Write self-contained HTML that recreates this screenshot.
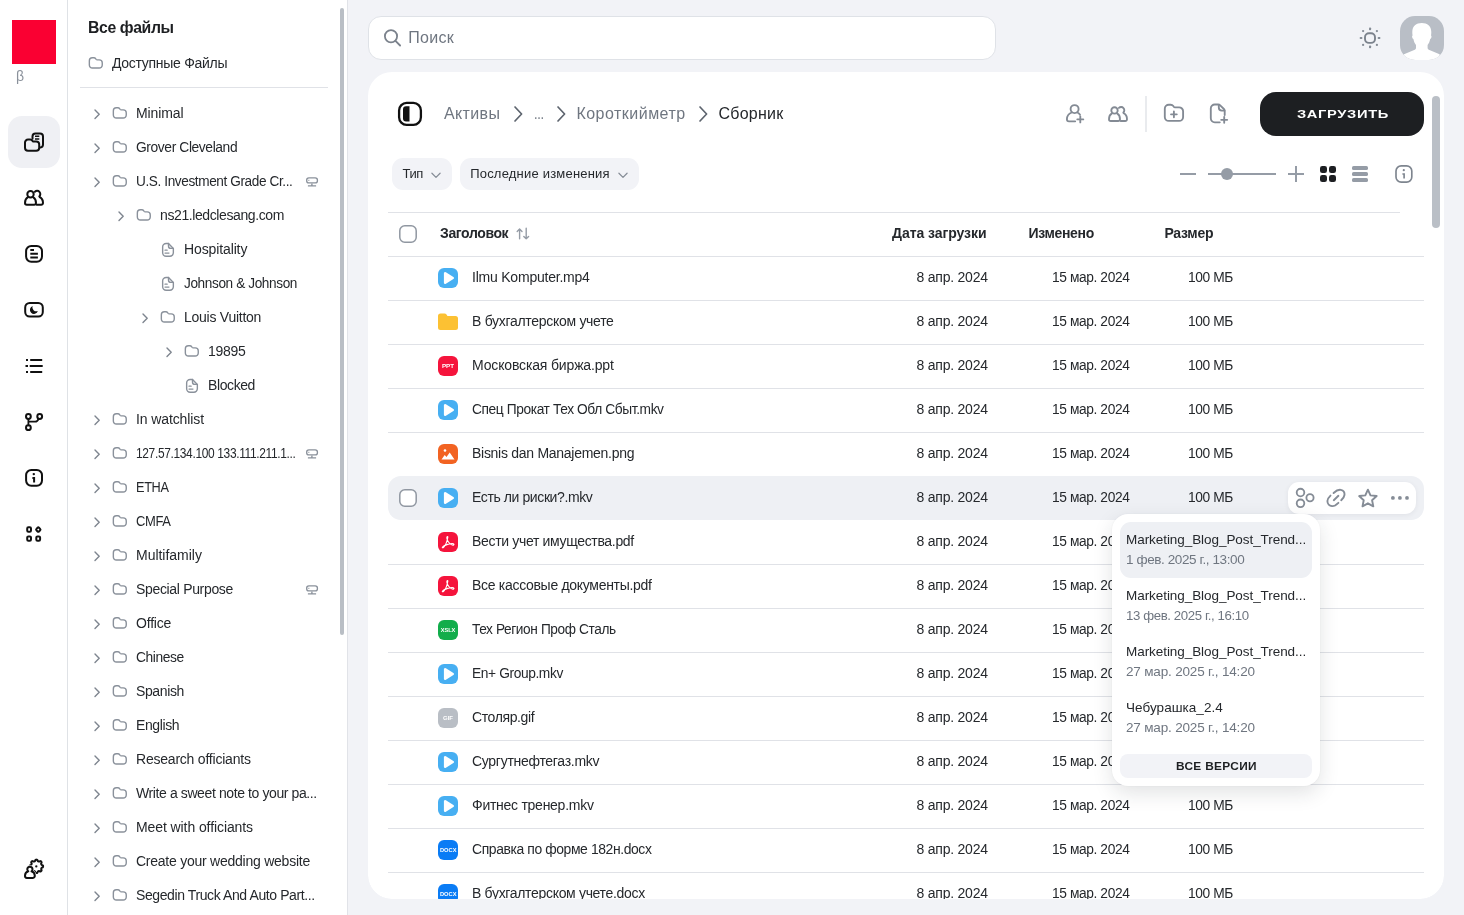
<!DOCTYPE html>
<html lang="ru"><head><meta charset="utf-8"><title>Файлы</title><style>
*{box-sizing:border-box;margin:0;padding:0}
html,body{width:1464px;height:915px;overflow:hidden}
body{background:#f2f3f7;font-family:"Liberation Sans",sans-serif;color:#1d1f22;position:relative;font-size:14px}
.abs{position:absolute}
.t{position:absolute;white-space:nowrap;line-height:20px}
svg{position:absolute;overflow:visible}
#app{position:absolute;left:0;top:0;width:1464px;height:915px;overflow:hidden;will-change:transform}
#rail{position:absolute;left:0;top:0;width:68px;height:915px;background:#fff;border-right:1px solid #dfe2e6}
#side{position:absolute;left:68px;top:0;width:280px;height:915px;background:#fff;border-right:1px solid #e1e3e8}
.tree{font-size:14.2px;letter-spacing:-0.1px;color:#25282c}
.row{position:absolute;left:388px;width:1036px;height:44px;border-top:1px solid #e0e2e7}
.cell{position:absolute;white-space:nowrap;line-height:20px;top:11px;font-size:14.2px;letter-spacing:-0.15px;color:#25282c}
.fi{position:absolute;left:50px;top:11px;width:20px;height:20px;border-radius:6px}
</style></head><body><div id="app">
<div id="rail"></div>
<div class="abs" style="left:12px;top:20px;width:44px;height:44px;background:#fa0032"></div>
<div class="t" style="left:16px;top:66px;font-size:14px;color:#8a919b">β</div>
<div class="abs" style="left:8px;top:116px;width:52px;height:52px;border-radius:14px;background:#eff0f4"></div>
<svg style="left:22px;top:130px" width="24" height="24" viewBox="0 0 24 24" fill="none" stroke="#111" stroke-width="2" stroke-linecap="round" stroke-linejoin="round" ><path d="M10.500 8.800V6.600a3 3 0 0 1 3-3h4.500a3 3 0 0 1 3 3v8a3 3 0 0 1-2.600 3"/><path d="M13 6.300h4.300M13 8.900h4.300" stroke-width="1.500" stroke-linecap="butt"/><path d="M3 12.600a3 3 0 0 1 3-3h2.200c.9 0 1.600.4 2.100 1.100l.6.800h3.300a3 3 0 0 1 3 3v3.200a3 3 0 0 1-3 3H6a3 3 0 0 1-3-3z"/></svg>
<svg style="left:22px;top:186px" width="24" height="24" viewBox="0 0 24 24" fill="none" stroke="#111" stroke-width="2" stroke-linecap="round" stroke-linejoin="round" ><circle cx="8.500" cy="8.200" r="3.200"/><path d="M5.900 11.200C4 12.300 3 14.500 3 17a1.800 1.800 0 0 0 1.800 1.800h7.400A1.800 1.800 0 0 0 14 17c0-2.500-1-4.700-2.900-5.800"/><path d="M12.900 5.700a3.200 3.200 0 1 1 4.400 4.700M17.600 11c2.200 1.100 3.400 3.400 3.400 6a1.800 1.800 0 0 1-1.800 1.800h-4.500"/></svg>
<svg style="left:22px;top:242px" width="24" height="24" viewBox="0 0 24 24" fill="none" stroke="#111" stroke-width="2" stroke-linecap="round" stroke-linejoin="round" ><rect x="4.100" y="3.900" width="15.900" height="15.800" rx="5.200"/><path d="M8.300 7.900h3.700M8.300 11.800h7.600M8.300 15.500h7.600" stroke-linecap="butt"/></svg>
<svg style="left:22px;top:298px" width="24" height="24" viewBox="0 0 24 24" fill="none" stroke="#111" stroke-width="2" stroke-linecap="round" stroke-linejoin="round" ><rect x="3.200" y="5" width="17.600" height="13.600" rx="4.500"/><path d="M15.900 13a4 4 0 0 1-5.300-5.100 4.100 4.100 0 1 0 5.300 5.100z" fill="#111" stroke="none"/></svg>
<svg style="left:22px;top:354px" width="24" height="24" viewBox="0 0 24 24" fill="none" stroke="#111" stroke-width="2" stroke-linecap="round" stroke-linejoin="round" ><path d="M8.200 6h12M7.700 12h13M8.200 18h12M4 6h2M3.500 12h2.500M4 18h2" stroke-linecap="butt"/></svg>
<svg style="left:22px;top:410px" width="24" height="24" viewBox="0 0 24 24" fill="none" stroke="#111" stroke-width="2" stroke-linecap="round" stroke-linejoin="round" ><circle cx="6.400" cy="6.500" r="2.400"/><circle cx="6.400" cy="17.700" r="2.400"/><circle cx="17.700" cy="6.500" r="2.400"/><path d="M6.400 9v6.300M6.400 11.700h6.800c1.500 0 2.600-1 3.400-2.800" stroke-width="1.800"/></svg>
<svg style="left:22px;top:466px" width="24" height="24" viewBox="0 0 24 24" fill="none" stroke="#111" stroke-width="2" stroke-linecap="round" stroke-linejoin="round" ><rect x="4.100" y="3.900" width="15.900" height="15.800" rx="5.200"/><path d="M10.400 12h1.700v4.400" stroke-linecap="butt" stroke-linejoin="miter"/><circle cx="11.800" cy="8.100" r="1.200" fill="#111" stroke="none"/></svg>
<svg style="left:22px;top:522px" width="24" height="24" viewBox="0 0 24 24" fill="none" stroke="#111" stroke-width="2" stroke-linecap="round" stroke-linejoin="round" ><rect x="5.200" y="5.300" width="3.800" height="4.400" rx="1.200"/><rect x="5.200" y="14.400" width="3.800" height="4.400" rx="1.200"/><rect x="14.300" y="14.400" width="3.800" height="4.400" rx="1.200"/><rect x="14.500" y="5.800" width="3.600" height="3.600" rx="1" transform="rotate(45 16.300 7.600)"/></svg>
<svg style="left:22px;top:857px" width="24" height="24" viewBox="0 0 24 24" fill="none" stroke="#111" stroke-width="2" stroke-linecap="round" stroke-linejoin="round" ><path d="M14.40 2.62 L14.73 2.63 L15.05 2.65 L15.35 2.91 L15.57 3.42 L15.75 3.92 L15.94 4.21 L16.19 4.29 L16.44 4.38 L16.67 4.49 L16.91 4.61 L17.25 4.54 L17.73 4.31 L18.25 4.11 L18.64 4.14 L18.89 4.35 L19.12 4.58 L19.35 4.81 L19.56 5.06 L19.59 5.45 L19.39 5.97 L19.16 6.45 L19.09 6.79 L19.21 7.03 L19.32 7.26 L19.41 7.51 L19.49 7.76 L19.78 7.95 L20.28 8.13 L20.79 8.35 L21.05 8.65 L21.07 8.97 L21.08 9.30 L21.07 9.63 L21.05 9.95 L20.79 10.25 L20.28 10.47 L19.78 10.65 L19.49 10.84 L19.41 11.09 L19.32 11.34 L19.21 11.57 L19.09 11.81 L19.16 12.15 L19.39 12.63 L19.59 13.15 L19.56 13.54 L19.35 13.79 L19.12 14.02 L18.89 14.25 L18.64 14.46 L18.25 14.49 L17.73 14.29 L17.25 14.06 L16.91 13.99 L16.67 14.11 L16.44 14.22 L16.19 14.31 L15.94 14.39 L15.75 14.68 L15.57 15.18 L15.35 15.69 L15.05 15.95 L14.73 15.97 L14.40 15.98 L14.07 15.97 L13.75 15.95 L13.45 15.69 L13.23 15.18 L13.05 14.68 L12.86 14.39 L12.61 14.31 L12.36 14.22 L12.13 14.11 L11.89 13.99 L11.55 14.06 L11.07 14.29 L10.55 14.49 L10.16 14.46 L9.91 14.25 L9.68 14.02 L9.45 13.79 L9.24 13.54 L9.21 13.15 L9.41 12.63 L9.64 12.15 L9.71 11.81 L9.59 11.57 L9.48 11.34 L9.39 11.09 L9.31 10.84 L9.02 10.65 L8.52 10.47 L8.01 10.25 L7.75 9.95 L7.73 9.63 L7.72 9.30 L7.73 8.97 L7.75 8.65 L8.01 8.35 L8.52 8.13 L9.02 7.95 L9.31 7.76 L9.39 7.51 L9.48 7.26 L9.59 7.03 L9.71 6.79 L9.64 6.45 L9.41 5.97 L9.21 5.45 L9.24 5.06 L9.45 4.81 L9.68 4.58 L9.91 4.35 L10.16 4.14 L10.55 4.11 L11.07 4.31 L11.55 4.54 L11.89 4.61 L12.13 4.49 L12.36 4.38 L12.61 4.29 L12.86 4.21 L13.05 3.92 L13.23 3.42 L13.45 2.91 L13.75 2.65 L14.07 2.63Z" stroke-width="2"/><circle cx="14.300" cy="9.400" r="1.150" fill="#111" stroke="none"/><path d="M6.300 14.300a2.600 2.600 0 1 1 3.200 0c1.900.6 3.300 2.400 3.300 4.500v.3a1.800 1.800 0 0 1-1.800 1.800H4.800A1.800 1.800 0 0 1 3 19.100v-.3c0-2.100 1.400-3.900 3.300-4.500z" fill="#fff" stroke="#fff" stroke-width="3"/><path d="M6.300 14.300a2.600 2.600 0 1 1 3.200 0c1.900.6 3.300 2.400 3.300 4.500v.3a1.800 1.800 0 0 1-1.800 1.800H4.800A1.800 1.800 0 0 1 3 19.100v-.3c0-2.100 1.400-3.900 3.300-4.500z" fill="#fff"/></svg>
<div id="side"></div>
<div class="t " style="left:88.3px;top:18px;font-size:16px;font-weight:700;color:#1d1f22;letter-spacing:-0.400px;transform:scaleX(0.9867);transform-origin:0 0;">Все файлы</div>
<svg style="left:88px;top:55px" width="16" height="16" viewBox="0 0 16 16" fill="none" stroke="#8a919b" stroke-width="1.4" stroke-linecap="round" stroke-linejoin="round" ><path d="M1.350 5.750a3 3 0 0 1 3-3h1.500c.8 0 1.400.3 1.800.9l.5.700c.3.400.6.500 1.100.500h2a3 3 0 0 1 3 3v2.200a3 3 0 0 1-3 3H4.350a3 3 0 0 1-3-3z"/></svg>
<div class="t " style="left:112px;top:53px;font-size:14px;color:#25282c;letter-spacing:-0.288px;">Доступные Файлы</div>
<div class="abs" style="left:80px;top:87px;width:248px;height:1px;background:#e0e2e7"></div>
<svg style="left:94.55px;top:109.65px" width="5" height="9" viewBox="0 0 5 9" fill="none" stroke="#7e858f" stroke-width="1.4" stroke-linecap="round" stroke-linejoin="round" ><path d="M0 0l4.200 4.200L0 8.400"/></svg>
<svg style="left:112px;top:105px" width="16" height="16" viewBox="0 0 16 16" fill="none" stroke="#8a919b" stroke-width="1.4" stroke-linecap="round" stroke-linejoin="round" ><path d="M1.350 5.750a3 3 0 0 1 3-3h1.500c.8 0 1.400.3 1.800.9l.5.700c.3.400.6.500 1.100.500h2a3 3 0 0 1 3 3v2.200a3 3 0 0 1-3 3H4.350a3 3 0 0 1-3-3z"/></svg>
<div class="t " style="left:136px;top:103.4px;font-size:14px;color:#25282c;letter-spacing:-0.122px;">Minimal</div>
<svg style="left:94.55px;top:143.65px" width="5" height="9" viewBox="0 0 5 9" fill="none" stroke="#7e858f" stroke-width="1.4" stroke-linecap="round" stroke-linejoin="round" ><path d="M0 0l4.200 4.200L0 8.400"/></svg>
<svg style="left:112px;top:139px" width="16" height="16" viewBox="0 0 16 16" fill="none" stroke="#8a919b" stroke-width="1.4" stroke-linecap="round" stroke-linejoin="round" ><path d="M1.350 5.750a3 3 0 0 1 3-3h1.500c.8 0 1.400.3 1.800.9l.5.700c.3.400.6.500 1.100.500h2a3 3 0 0 1 3 3v2.200a3 3 0 0 1-3 3H4.350a3 3 0 0 1-3-3z"/></svg>
<div class="t " style="left:136px;top:137.4px;font-size:14px;color:#25282c;letter-spacing:-0.400px;transform:scaleX(0.9870);transform-origin:0 0;">Grover Cleveland</div>
<svg style="left:94.55px;top:177.65px" width="5" height="9" viewBox="0 0 5 9" fill="none" stroke="#7e858f" stroke-width="1.4" stroke-linecap="round" stroke-linejoin="round" ><path d="M0 0l4.200 4.200L0 8.400"/></svg>
<svg style="left:112px;top:173px" width="16" height="16" viewBox="0 0 16 16" fill="none" stroke="#8a919b" stroke-width="1.4" stroke-linecap="round" stroke-linejoin="round" ><path d="M1.350 5.750a3 3 0 0 1 3-3h1.500c.8 0 1.400.3 1.800.9l.5.700c.3.400.6.500 1.100.500h2a3 3 0 0 1 3 3v2.200a3 3 0 0 1-3 3H4.350a3 3 0 0 1-3-3z"/></svg>
<div class="t " style="left:136px;top:171.4px;font-size:14px;color:#25282c;letter-spacing:-0.400px;transform:scaleX(0.9712);transform-origin:0 0;">U.S. Investment Grade Cr...</div>
<svg style="left:305px;top:174px" width="14" height="14" viewBox="0 0 14 14" fill="none" stroke="#8a919b" stroke-width="1.35" stroke-linecap="round" stroke-linejoin="round" ><rect x="1.700" y="3.800" width="10.700" height="5.100" rx="2.200"/><path d="M6.900 9.500v1.800M2.900 11.900h8.200M3.400 6.400h.9" stroke-linecap="butt"/></svg>
<svg style="left:118.55px;top:211.65px" width="5" height="9" viewBox="0 0 5 9" fill="none" stroke="#7e858f" stroke-width="1.4" stroke-linecap="round" stroke-linejoin="round" ><path d="M0 0l4.200 4.200L0 8.400"/></svg>
<svg style="left:136px;top:207px" width="16" height="16" viewBox="0 0 16 16" fill="none" stroke="#8a919b" stroke-width="1.4" stroke-linecap="round" stroke-linejoin="round" ><path d="M1.350 5.750a3 3 0 0 1 3-3h1.500c.8 0 1.400.3 1.800.9l.5.700c.3.400.6.500 1.100.500h2a3 3 0 0 1 3 3v2.200a3 3 0 0 1-3 3H4.350a3 3 0 0 1-3-3z"/></svg>
<div class="t " style="left:160px;top:205.4px;font-size:14px;color:#25282c;letter-spacing:-0.396px;">ns21.ledclesang.com</div>
<svg style="left:160px;top:241px" width="16" height="16" viewBox="0 0 16 16" fill="none" stroke="#8a919b" stroke-width="1.4" stroke-linecap="round" stroke-linejoin="round" ><path d="M8.500 2.550H6.150a3.500 3.500 0 0 0-3.500 3.500v5.700a3.500 3.500 0 0 0 3.500 3.500h3.700a3.500 3.500 0 0 0 3.500-3.500V7.400z"/><path d="M8.500 2.550v2.350a2.500 2.500 0 0 0 2.500 2.500h2.350"/><path d="M5 9.200h2.200M5 12.100h4" stroke-width="1.200"/></svg>
<div class="t " style="left:184px;top:239.4px;font-size:14px;color:#25282c;letter-spacing:-0.119px;">Hospitality</div>
<svg style="left:160px;top:275px" width="16" height="16" viewBox="0 0 16 16" fill="none" stroke="#8a919b" stroke-width="1.4" stroke-linecap="round" stroke-linejoin="round" ><path d="M8.500 2.550H6.150a3.500 3.500 0 0 0-3.500 3.500v5.700a3.500 3.500 0 0 0 3.500 3.500h3.700a3.500 3.500 0 0 0 3.500-3.500V7.400z"/><path d="M8.500 2.550v2.350a2.500 2.500 0 0 0 2.500 2.500h2.350"/><path d="M5 9.200h2.200M5 12.100h4" stroke-width="1.200"/></svg>
<div class="t " style="left:184px;top:273.4px;font-size:14px;color:#25282c;letter-spacing:-0.400px;transform:scaleX(0.9727);transform-origin:0 0;">Johnson &amp; Johnson</div>
<svg style="left:142.55px;top:313.65px" width="5" height="9" viewBox="0 0 5 9" fill="none" stroke="#7e858f" stroke-width="1.4" stroke-linecap="round" stroke-linejoin="round" ><path d="M0 0l4.200 4.200L0 8.400"/></svg>
<svg style="left:160px;top:309px" width="16" height="16" viewBox="0 0 16 16" fill="none" stroke="#8a919b" stroke-width="1.4" stroke-linecap="round" stroke-linejoin="round" ><path d="M1.350 5.750a3 3 0 0 1 3-3h1.500c.8 0 1.400.3 1.800.9l.5.700c.3.400.6.500 1.100.500h2a3 3 0 0 1 3 3v2.200a3 3 0 0 1-3 3H4.350a3 3 0 0 1-3-3z"/></svg>
<div class="t " style="left:184px;top:307.4px;font-size:14px;color:#25282c;letter-spacing:-0.253px;">Louis Vuitton</div>
<svg style="left:166.55px;top:347.65px" width="5" height="9" viewBox="0 0 5 9" fill="none" stroke="#7e858f" stroke-width="1.4" stroke-linecap="round" stroke-linejoin="round" ><path d="M0 0l4.200 4.200L0 8.400"/></svg>
<svg style="left:184px;top:343px" width="16" height="16" viewBox="0 0 16 16" fill="none" stroke="#8a919b" stroke-width="1.4" stroke-linecap="round" stroke-linejoin="round" ><path d="M1.350 5.750a3 3 0 0 1 3-3h1.500c.8 0 1.400.3 1.800.9l.5.700c.3.400.6.500 1.100.500h2a3 3 0 0 1 3 3v2.200a3 3 0 0 1-3 3H4.350a3 3 0 0 1-3-3z"/></svg>
<div class="t " style="left:208px;top:341.4px;font-size:14px;color:#25282c;letter-spacing:-0.284px;">19895</div>
<svg style="left:184px;top:377px" width="16" height="16" viewBox="0 0 16 16" fill="none" stroke="#8a919b" stroke-width="1.4" stroke-linecap="round" stroke-linejoin="round" ><path d="M8.500 2.550H6.150a3.500 3.500 0 0 0-3.500 3.500v5.700a3.500 3.500 0 0 0 3.500 3.500h3.700a3.500 3.500 0 0 0 3.500-3.500V7.400z"/><path d="M8.500 2.550v2.350a2.500 2.500 0 0 0 2.500 2.500h2.350"/><path d="M5 9.200h2.200M5 12.100h4" stroke-width="1.200"/></svg>
<div class="t " style="left:208px;top:375.4px;font-size:14px;color:#25282c;letter-spacing:-0.400px;">Blocked</div>
<svg style="left:94.55px;top:415.65px" width="5" height="9" viewBox="0 0 5 9" fill="none" stroke="#7e858f" stroke-width="1.4" stroke-linecap="round" stroke-linejoin="round" ><path d="M0 0l4.200 4.200L0 8.400"/></svg>
<svg style="left:112px;top:411px" width="16" height="16" viewBox="0 0 16 16" fill="none" stroke="#8a919b" stroke-width="1.4" stroke-linecap="round" stroke-linejoin="round" ><path d="M1.350 5.750a3 3 0 0 1 3-3h1.500c.8 0 1.400.3 1.800.9l.5.700c.3.400.6.500 1.100.500h2a3 3 0 0 1 3 3v2.200a3 3 0 0 1-3 3H4.350a3 3 0 0 1-3-3z"/></svg>
<div class="t " style="left:136px;top:409.4px;font-size:14px;color:#25282c;letter-spacing:-0.105px;">In watchlist</div>
<svg style="left:94.55px;top:449.65px" width="5" height="9" viewBox="0 0 5 9" fill="none" stroke="#7e858f" stroke-width="1.4" stroke-linecap="round" stroke-linejoin="round" ><path d="M0 0l4.200 4.200L0 8.400"/></svg>
<svg style="left:112px;top:445px" width="16" height="16" viewBox="0 0 16 16" fill="none" stroke="#8a919b" stroke-width="1.4" stroke-linecap="round" stroke-linejoin="round" ><path d="M1.350 5.750a3 3 0 0 1 3-3h1.500c.8 0 1.400.3 1.800.9l.5.700c.3.400.6.500 1.100.500h2a3 3 0 0 1 3 3v2.200a3 3 0 0 1-3 3H4.350a3 3 0 0 1-3-3z"/></svg>
<div class="t " style="left:136px;top:443.4px;font-size:14px;color:#25282c;letter-spacing:-0.400px;transform:scaleX(0.8537);transform-origin:0 0;">127.57.134.100 133.111.211.1...</div>
<svg style="left:305px;top:446px" width="14" height="14" viewBox="0 0 14 14" fill="none" stroke="#8a919b" stroke-width="1.35" stroke-linecap="round" stroke-linejoin="round" ><rect x="1.700" y="3.800" width="10.700" height="5.100" rx="2.200"/><path d="M6.900 9.500v1.800M2.900 11.900h8.200M3.400 6.400h.9" stroke-linecap="butt"/></svg>
<svg style="left:94.55px;top:483.65px" width="5" height="9" viewBox="0 0 5 9" fill="none" stroke="#7e858f" stroke-width="1.4" stroke-linecap="round" stroke-linejoin="round" ><path d="M0 0l4.200 4.200L0 8.400"/></svg>
<svg style="left:112px;top:479px" width="16" height="16" viewBox="0 0 16 16" fill="none" stroke="#8a919b" stroke-width="1.4" stroke-linecap="round" stroke-linejoin="round" ><path d="M1.350 5.750a3 3 0 0 1 3-3h1.500c.8 0 1.400.3 1.800.9l.5.700c.3.400.6.500 1.100.500h2a3 3 0 0 1 3 3v2.200a3 3 0 0 1-3 3H4.350a3 3 0 0 1-3-3z"/></svg>
<div class="t " style="left:136px;top:477.4px;font-size:14px;color:#25282c;letter-spacing:-0.400px;transform:scaleX(0.9103);transform-origin:0 0;">ETHA</div>
<svg style="left:94.55px;top:517.65px" width="5" height="9" viewBox="0 0 5 9" fill="none" stroke="#7e858f" stroke-width="1.4" stroke-linecap="round" stroke-linejoin="round" ><path d="M0 0l4.200 4.200L0 8.400"/></svg>
<svg style="left:112px;top:513px" width="16" height="16" viewBox="0 0 16 16" fill="none" stroke="#8a919b" stroke-width="1.4" stroke-linecap="round" stroke-linejoin="round" ><path d="M1.350 5.750a3 3 0 0 1 3-3h1.500c.8 0 1.400.3 1.800.9l.5.700c.3.400.6.500 1.100.500h2a3 3 0 0 1 3 3v2.200a3 3 0 0 1-3 3H4.350a3 3 0 0 1-3-3z"/></svg>
<div class="t " style="left:136px;top:511.4px;font-size:14px;color:#25282c;letter-spacing:-0.400px;transform:scaleX(0.9260);transform-origin:0 0;">CMFA</div>
<svg style="left:94.55px;top:551.65px" width="5" height="9" viewBox="0 0 5 9" fill="none" stroke="#7e858f" stroke-width="1.4" stroke-linecap="round" stroke-linejoin="round" ><path d="M0 0l4.200 4.200L0 8.400"/></svg>
<svg style="left:112px;top:547px" width="16" height="16" viewBox="0 0 16 16" fill="none" stroke="#8a919b" stroke-width="1.4" stroke-linecap="round" stroke-linejoin="round" ><path d="M1.350 5.750a3 3 0 0 1 3-3h1.500c.8 0 1.400.3 1.800.9l.5.700c.3.400.6.500 1.100.500h2a3 3 0 0 1 3 3v2.200a3 3 0 0 1-3 3H4.350a3 3 0 0 1-3-3z"/></svg>
<div class="t " style="left:136px;top:545.4px;font-size:14px;color:#25282c;letter-spacing:-0.022px;">Multifamily</div>
<svg style="left:94.55px;top:585.65px" width="5" height="9" viewBox="0 0 5 9" fill="none" stroke="#7e858f" stroke-width="1.4" stroke-linecap="round" stroke-linejoin="round" ><path d="M0 0l4.200 4.200L0 8.400"/></svg>
<svg style="left:112px;top:581px" width="16" height="16" viewBox="0 0 16 16" fill="none" stroke="#8a919b" stroke-width="1.4" stroke-linecap="round" stroke-linejoin="round" ><path d="M1.350 5.750a3 3 0 0 1 3-3h1.500c.8 0 1.400.3 1.800.9l.5.700c.3.400.6.500 1.100.500h2a3 3 0 0 1 3 3v2.200a3 3 0 0 1-3 3H4.350a3 3 0 0 1-3-3z"/></svg>
<div class="t " style="left:136px;top:579.4px;font-size:14px;color:#25282c;letter-spacing:-0.332px;">Special Purpose</div>
<svg style="left:305px;top:582px" width="14" height="14" viewBox="0 0 14 14" fill="none" stroke="#8a919b" stroke-width="1.35" stroke-linecap="round" stroke-linejoin="round" ><rect x="1.700" y="3.800" width="10.700" height="5.100" rx="2.200"/><path d="M6.900 9.500v1.800M2.900 11.900h8.200M3.400 6.400h.9" stroke-linecap="butt"/></svg>
<svg style="left:94.55px;top:619.65px" width="5" height="9" viewBox="0 0 5 9" fill="none" stroke="#7e858f" stroke-width="1.4" stroke-linecap="round" stroke-linejoin="round" ><path d="M0 0l4.200 4.200L0 8.400"/></svg>
<svg style="left:112px;top:615px" width="16" height="16" viewBox="0 0 16 16" fill="none" stroke="#8a919b" stroke-width="1.4" stroke-linecap="round" stroke-linejoin="round" ><path d="M1.350 5.750a3 3 0 0 1 3-3h1.500c.8 0 1.400.3 1.800.9l.5.700c.3.400.6.500 1.100.500h2a3 3 0 0 1 3 3v2.200a3 3 0 0 1-3 3H4.350a3 3 0 0 1-3-3z"/></svg>
<div class="t " style="left:136px;top:613.4px;font-size:14px;color:#25282c;letter-spacing:-0.183px;">Office</div>
<svg style="left:94.55px;top:653.65px" width="5" height="9" viewBox="0 0 5 9" fill="none" stroke="#7e858f" stroke-width="1.4" stroke-linecap="round" stroke-linejoin="round" ><path d="M0 0l4.200 4.200L0 8.400"/></svg>
<svg style="left:112px;top:649px" width="16" height="16" viewBox="0 0 16 16" fill="none" stroke="#8a919b" stroke-width="1.4" stroke-linecap="round" stroke-linejoin="round" ><path d="M1.350 5.750a3 3 0 0 1 3-3h1.500c.8 0 1.400.3 1.800.9l.5.700c.3.400.6.500 1.100.500h2a3 3 0 0 1 3 3v2.200a3 3 0 0 1-3 3H4.350a3 3 0 0 1-3-3z"/></svg>
<div class="t " style="left:136px;top:647.4px;font-size:14px;color:#25282c;letter-spacing:-0.400px;transform:scaleX(0.9862);transform-origin:0 0;">Chinese</div>
<svg style="left:94.55px;top:687.65px" width="5" height="9" viewBox="0 0 5 9" fill="none" stroke="#7e858f" stroke-width="1.4" stroke-linecap="round" stroke-linejoin="round" ><path d="M0 0l4.200 4.200L0 8.400"/></svg>
<svg style="left:112px;top:683px" width="16" height="16" viewBox="0 0 16 16" fill="none" stroke="#8a919b" stroke-width="1.4" stroke-linecap="round" stroke-linejoin="round" ><path d="M1.350 5.750a3 3 0 0 1 3-3h1.500c.8 0 1.400.3 1.800.9l.5.700c.3.400.6.500 1.100.500h2a3 3 0 0 1 3 3v2.200a3 3 0 0 1-3 3H4.350a3 3 0 0 1-3-3z"/></svg>
<div class="t " style="left:136px;top:681.4px;font-size:14px;color:#25282c;letter-spacing:-0.382px;">Spanish</div>
<svg style="left:94.55px;top:721.65px" width="5" height="9" viewBox="0 0 5 9" fill="none" stroke="#7e858f" stroke-width="1.4" stroke-linecap="round" stroke-linejoin="round" ><path d="M0 0l4.200 4.200L0 8.400"/></svg>
<svg style="left:112px;top:717px" width="16" height="16" viewBox="0 0 16 16" fill="none" stroke="#8a919b" stroke-width="1.4" stroke-linecap="round" stroke-linejoin="round" ><path d="M1.350 5.750a3 3 0 0 1 3-3h1.500c.8 0 1.400.3 1.800.9l.5.700c.3.400.6.500 1.100.500h2a3 3 0 0 1 3 3v2.200a3 3 0 0 1-3 3H4.350a3 3 0 0 1-3-3z"/></svg>
<div class="t " style="left:136px;top:715.4px;font-size:14px;color:#25282c;letter-spacing:-0.400px;">English</div>
<svg style="left:94.55px;top:755.65px" width="5" height="9" viewBox="0 0 5 9" fill="none" stroke="#7e858f" stroke-width="1.4" stroke-linecap="round" stroke-linejoin="round" ><path d="M0 0l4.200 4.200L0 8.400"/></svg>
<svg style="left:112px;top:751px" width="16" height="16" viewBox="0 0 16 16" fill="none" stroke="#8a919b" stroke-width="1.4" stroke-linecap="round" stroke-linejoin="round" ><path d="M1.350 5.750a3 3 0 0 1 3-3h1.500c.8 0 1.400.3 1.800.9l.5.700c.3.400.6.500 1.100.500h2a3 3 0 0 1 3 3v2.200a3 3 0 0 1-3 3H4.350a3 3 0 0 1-3-3z"/></svg>
<div class="t " style="left:136px;top:749.4px;font-size:14px;color:#25282c;letter-spacing:-0.217px;">Research officiants</div>
<svg style="left:94.55px;top:789.65px" width="5" height="9" viewBox="0 0 5 9" fill="none" stroke="#7e858f" stroke-width="1.4" stroke-linecap="round" stroke-linejoin="round" ><path d="M0 0l4.200 4.200L0 8.400"/></svg>
<svg style="left:112px;top:785px" width="16" height="16" viewBox="0 0 16 16" fill="none" stroke="#8a919b" stroke-width="1.4" stroke-linecap="round" stroke-linejoin="round" ><path d="M1.350 5.750a3 3 0 0 1 3-3h1.500c.8 0 1.400.3 1.800.9l.5.700c.3.400.6.500 1.100.500h2a3 3 0 0 1 3 3v2.200a3 3 0 0 1-3 3H4.350a3 3 0 0 1-3-3z"/></svg>
<div class="t " style="left:136px;top:783.4px;font-size:14px;color:#25282c;letter-spacing:-0.397px;">Write a sweet note to your pa...</div>
<svg style="left:94.55px;top:823.65px" width="5" height="9" viewBox="0 0 5 9" fill="none" stroke="#7e858f" stroke-width="1.4" stroke-linecap="round" stroke-linejoin="round" ><path d="M0 0l4.200 4.200L0 8.400"/></svg>
<svg style="left:112px;top:819px" width="16" height="16" viewBox="0 0 16 16" fill="none" stroke="#8a919b" stroke-width="1.4" stroke-linecap="round" stroke-linejoin="round" ><path d="M1.350 5.750a3 3 0 0 1 3-3h1.500c.8 0 1.400.3 1.800.9l.5.700c.3.400.6.500 1.100.500h2a3 3 0 0 1 3 3v2.200a3 3 0 0 1-3 3H4.350a3 3 0 0 1-3-3z"/></svg>
<div class="t " style="left:136px;top:817.4px;font-size:14px;color:#25282c;letter-spacing:-0.089px;">Meet with officiants</div>
<svg style="left:94.55px;top:857.65px" width="5" height="9" viewBox="0 0 5 9" fill="none" stroke="#7e858f" stroke-width="1.4" stroke-linecap="round" stroke-linejoin="round" ><path d="M0 0l4.200 4.200L0 8.400"/></svg>
<svg style="left:112px;top:853px" width="16" height="16" viewBox="0 0 16 16" fill="none" stroke="#8a919b" stroke-width="1.4" stroke-linecap="round" stroke-linejoin="round" ><path d="M1.350 5.750a3 3 0 0 1 3-3h1.500c.8 0 1.400.3 1.800.9l.5.700c.3.400.6.500 1.100.500h2a3 3 0 0 1 3 3v2.200a3 3 0 0 1-3 3H4.350a3 3 0 0 1-3-3z"/></svg>
<div class="t " style="left:136px;top:851.4px;font-size:14px;color:#25282c;letter-spacing:-0.244px;">Create your wedding website</div>
<svg style="left:94.55px;top:891.65px" width="5" height="9" viewBox="0 0 5 9" fill="none" stroke="#7e858f" stroke-width="1.4" stroke-linecap="round" stroke-linejoin="round" ><path d="M0 0l4.200 4.200L0 8.400"/></svg>
<svg style="left:112px;top:887px" width="16" height="16" viewBox="0 0 16 16" fill="none" stroke="#8a919b" stroke-width="1.4" stroke-linecap="round" stroke-linejoin="round" ><path d="M1.350 5.750a3 3 0 0 1 3-3h1.500c.8 0 1.400.3 1.800.9l.5.700c.3.400.6.500 1.100.500h2a3 3 0 0 1 3 3v2.200a3 3 0 0 1-3 3H4.350a3 3 0 0 1-3-3z"/></svg>
<div class="t " style="left:136px;top:885.4px;font-size:14px;color:#25282c;letter-spacing:-0.400px;">Segedin Truck And Auto Part...</div>
<div class="abs" style="left:340px;top:8px;width:4px;height:627px;border-radius:2px;background:#b9bec5"></div>
<div class="abs" style="left:368px;top:16px;width:628px;height:44px;border-radius:13px;background:#fff;border:1px solid #dfe2e7"></div>
<svg style="left:383px;top:28px" width="20" height="20" viewBox="0 0 20 20" fill="none" stroke="#7b828c" stroke-width="1.8" stroke-linecap="round" stroke-linejoin="round" ><circle cx="8" cy="8.200" r="6.100"/><path d="M12.500 12.800l4.600 4.700"/></svg>
<div class="t " style="left:408.3px;top:27.5px;font-size:16px;color:#6f7680;letter-spacing:0.289px;">Поиск</div>
<svg style="left:1358px;top:26px" width="24" height="24" viewBox="0 0 24 24" fill="none" stroke="#7b828c" stroke-width="1.9" stroke-linecap="round" stroke-linejoin="round" ><rect x="7" y="7.200" width="10" height="9.700" rx="4" stroke-width="1.900"/><g stroke="none" fill="#858c96"><rect x="11" y="1.500" width="2.100" height="2.700" rx=".8"/><rect x="11" y="19.500" width="2.100" height="2.700" rx=".8"/><rect x="1.700" y="10.950" width="2.700" height="2.100" rx=".8"/><rect x="19.700" y="10.950" width="2.700" height="2.100" rx=".8"/><circle cx="5.100" cy="5.100" r="1.150"/><circle cx="18.900" cy="5.100" r="1.150"/><circle cx="5.100" cy="18.900" r="1.150"/><circle cx="18.900" cy="18.900" r="1.150"/></g></svg>
<div class="abs" style="left:1400px;top:16px;width:44px;height:44px;border-radius:15px;background:#b9bec6;overflow:hidden"><svg style="left:0;top:0" width="44" height="44" viewBox="0 0 44 44" fill="#fff" stroke="none"><path d="M21.800 6.900c-5.500 0-9.500 3-9.500 9 0 1.500.1 2.600.3 3.600-.5.200-.6.900-.4 1.800.2 1 .7 1.700 1.200 1.800.5 2.500 1.400 4.500 2.600 6v3c0 .8-.4 1.300-1.200 1.600L4 38.300V44h35.600v-5.700l-10.800-4.600c-.8-.3-1.200-.8-1.200-1.600v-3c1.200-1.500 2.100-3.500 2.600-6 .5-.1 1-.8 1.200-1.800.2-.9.100-1.600-.4-1.800.2-1 .3-2.100.3-3.600 0-6-4-9-9.500-9z"/></svg></div>
<div class="abs" style="left:368px;top:72px;width:1076px;height:827px;border-radius:24px;background:#fff"></div>
<svg style="left:397px;top:101px" width="26" height="26" viewBox="0 0 26 26" fill="none" stroke="#111" stroke-width="2" stroke-linecap="round" stroke-linejoin="round" ><rect x="2.100" y="1.900" width="21.800" height="21.900" rx="7.500" stroke-width="2.300"/><path d="M6 8.300a3 3 0 0 1 3-3h3.500v15.100H9a3 3 0 0 1-3-3z" fill="#111" stroke="none"/></svg>
<div class="t " style="left:444px;top:103.8px;font-size:16px;color:#6f7680;letter-spacing:0.375px;">Активы</div>
<div class="t " style="left:533.5px;top:103.8px;font-size:16px;color:#6f7680;letter-spacing:-0.400px;transform:scaleX(0.7972);transform-origin:0 0;">...</div>
<div class="t " style="left:576.4px;top:103.8px;font-size:16px;color:#6f7680;letter-spacing:0.485px;">Короткийметр</div>
<div class="t " style="left:718.5px;top:103.8px;font-size:16px;color:#25282c;letter-spacing:0.234px;">Сборник</div>
<svg style="left:514.8px;top:106.5px" width="7" height="14" viewBox="0 0 7 14" fill="none" stroke="#5d646e" stroke-width="1.7" stroke-linecap="round" stroke-linejoin="round" ><path d="M0 0l6.600 7L0 14"/></svg>
<svg style="left:557.8px;top:106.5px" width="7" height="14" viewBox="0 0 7 14" fill="none" stroke="#5d646e" stroke-width="1.7" stroke-linecap="round" stroke-linejoin="round" ><path d="M0 0l6.600 7L0 14"/></svg>
<svg style="left:699.6px;top:106.5px" width="7" height="14" viewBox="0 0 7 14" fill="none" stroke="#5d646e" stroke-width="1.7" stroke-linecap="round" stroke-linejoin="round" ><path d="M0 0l6.600 7L0 14"/></svg>
<svg style="left:1062px;top:101px" width="24" height="24" viewBox="0 0 24 24" fill="none" stroke="#838a94" stroke-width="1.85" stroke-linecap="round" stroke-linejoin="round" ><circle cx="12.600" cy="8.100" r="4"/><path d="M9.700 11.500C6.600 12.800 4.900 15.600 4.900 18.200a2.100 2.100 0 0 0 2.100 2.100h6.200M15.300 11.500c1.200.5 2.100 1.300 2.700 2.300M18.300 15.400v6M15.300 18.400h6"/></svg>
<svg style="left:1106px;top:101px" width="24" height="24" viewBox="0 0 24 24" fill="none" stroke="#838a94" stroke-width="1.85" stroke-linecap="round" stroke-linejoin="round" ><g transform="translate(0 1.200)"><circle cx="8.500" cy="8.200" r="3.200"/><path d="M5.900 11.200C4 12.300 3 14.500 3 17a1.800 1.800 0 0 0 1.800 1.800h7.400A1.800 1.800 0 0 0 14 17c0-2.500-1-4.700-2.900-5.800"/><path d="M12.900 5.700a3.200 3.200 0 1 1 4.400 4.700M17.600 11c2.200 1.100 3.400 3.400 3.400 6a1.800 1.800 0 0 1-1.800 1.800h-4.500"/></g></svg>
<svg style="left:1162px;top:101px" width="24" height="24" viewBox="0 0 24 24" fill="none" stroke="#838a94" stroke-width="1.85" stroke-linecap="round" stroke-linejoin="round" ><path d="M2.800 7.700a4 4 0 0 1 4-4h1.900c1.200 0 2 .5 2.600 1.300l.5.700c.3.400.7.600 1.200.600h4.100a4 4 0 0 1 4 4v5.600a4 4 0 0 1-4 4H6.800a4 4 0 0 1-4-4z"/><path d="M11.900 10.400v5.800M9 13.300h5.800"/></svg>
<svg style="left:1206px;top:101px" width="24" height="24" viewBox="0 0 24 24" fill="none" stroke="#838a94" stroke-width="1.85" stroke-linecap="round" stroke-linejoin="round" ><path d="M13.800 21.300H8.800a4 4 0 0 1-4-4V7.500a4 4 0 0 1 4-4h3.400c.8 0 1.500.3 2 .8l3.700 3.700c.5.500.8 1.200.8 2v4"/><path d="M12.800 3.800v2.800a3 3 0 0 0 3 3h2.700M18.200 15.800v6M15.200 18.800h6"/></svg>
<div class="abs" style="left:1145.300px;top:96px;width:1.400px;height:36px;background:#e9ebee"></div>
<div class="abs" style="left:1260px;top:92px;width:164px;height:44px;border-radius:16px;background:#1d1f22"></div>
<div class="t " style="left:1296.6px;top:103.8px;font-size:11.2px;font-weight:700;color:#fff;letter-spacing:0.500px;transform:scaleX(1.3110);transform-origin:0 0;">ЗАГРУЗИТЬ</div>
<div class="abs" style="left:392px;top:158px;width:60px;height:32px;border-radius:11px;background:#f2f3f7"></div>
<div class="abs" style="left:460px;top:158px;width:179px;height:32px;border-radius:11px;background:#f2f3f7"></div>
<div class="t " style="left:402.4px;top:164px;font-size:13px;color:#25282c;letter-spacing:-0.336px;">Тип</div>
<div class="t " style="left:470.2px;top:164px;font-size:13px;color:#25282c;letter-spacing:0.202px;">Последние изменения</div>
<svg style="left:428.5px;top:167.5px" width="14" height="14" viewBox="0 0 24 24" fill="none" stroke="#858c96" stroke-width="2.1" stroke-linecap="round" stroke-linejoin="round" ><path d="M5 9l7 7 7-7"/></svg>
<svg style="left:615.5px;top:167.5px" width="14" height="14" viewBox="0 0 24 24" fill="none" stroke="#858c96" stroke-width="2.1" stroke-linecap="round" stroke-linejoin="round" ><path d="M5 9l7 7 7-7"/></svg>
<div class="abs" style="left:1180px;top:173px;width:16px;height:1.600px;background:#959ca6"></div>
<div class="abs" style="left:1208px;top:173px;width:68px;height:1.600px;background:#959ca6"></div>
<div class="abs" style="left:1220.600px;top:167.600px;width:12.400px;height:12.400px;border-radius:50%;background:#959ca6"></div>
<div class="abs" style="left:1288px;top:173px;width:16px;height:1.600px;background:#959ca6"></div>
<div class="abs" style="left:1295.200px;top:166px;width:1.600px;height:16px;background:#959ca6"></div>
<div class="abs" style="left:1320.1px;top:166.0px;width:7.100px;height:7.100px;border-radius:2.300px;background:#1d1f22"></div>
<div class="abs" style="left:1320.1px;top:174.9px;width:7.100px;height:7.100px;border-radius:2.300px;background:#1d1f22"></div>
<div class="abs" style="left:1329.0px;top:166.0px;width:7.100px;height:7.100px;border-radius:2.300px;background:#1d1f22"></div>
<div class="abs" style="left:1329.0px;top:174.9px;width:7.100px;height:7.100px;border-radius:2.300px;background:#1d1f22"></div>
<div class="abs" style="left:1352px;top:166px;width:16px;height:4px;border-radius:1.600px;background:#959ca6"></div>
<div class="abs" style="left:1352px;top:172px;width:16px;height:4px;border-radius:1.600px;background:#959ca6"></div>
<div class="abs" style="left:1352px;top:178px;width:16px;height:4px;border-radius:1.600px;background:#959ca6"></div>
<svg style="left:1392px;top:162px" width="24" height="24" viewBox="0 0 24 24" fill="none" stroke="#7e858f" stroke-width="1.65" stroke-linecap="round" stroke-linejoin="round" ><rect x="4" y="3.900" width="15.800" height="16.200" rx="5.200"/><path d="M10.400 12h1.700v4.400" stroke-linecap="butt" stroke-linejoin="miter"/><circle cx="11.800" cy="8.200" r="1.100" fill="#7e858f" stroke="none"/></svg>
<div class="abs" style="left:1432px;top:96px;width:8px;height:132px;border-radius:4px;background:#babfc6"></div>
<div class="abs" style="left:388px;top:212px;width:1012px;height:1px;background:#e0e2e7"></div>
<svg style="left:399px;top:225px" width="18" height="18" viewBox="0 0 18 18"><rect x=".8" y=".8" width="16.400" height="16.400" rx="5" fill="#fff" stroke="#9097a1" stroke-width="1.500"/></svg>
<div class="t " style="left:440px;top:223px;font-size:14px;font-weight:700;color:#25282c;letter-spacing:-0.382px;">Заголовок</div>
<div class="t " style="left:892px;top:223px;font-size:14px;font-weight:700;color:#25282c;letter-spacing:-0.061px;">Дата загрузки</div>
<div class="t " style="left:1028.4px;top:223px;font-size:14px;font-weight:700;color:#25282c;letter-spacing:-0.325px;">Изменено</div>
<div class="t " style="left:1164.4px;top:223px;font-size:14px;font-weight:700;color:#25282c;letter-spacing:-0.264px;">Размер</div>
<svg style="left:515px;top:226px" width="16" height="16" viewBox="0 0 16 16" fill="none" stroke="#959ca6" stroke-width="1.4" stroke-linecap="round" stroke-linejoin="round" ><path d="M4.600 12.700V3M2.200 5.400L4.600 3 7 5.400M11.200 2.300v10.500M8.800 10.400l2.400 2.400 2.400-2.400"/></svg>
<div class="row" style="top:256px;"><div class="fi" style="background:#47aff2"><svg style="left:0;top:0" width="20" height="20" viewBox="0 0 20 20" fill="#fff" stroke="#fff" stroke-width="2.600" stroke-linejoin="round"><path d="M7.200 5.300v9.400l7.500-4.700z"/></svg></div></div>
<div class="t " style="left:472px;top:267px;font-size:14px;color:#25282c;letter-spacing:-0.218px;">Ilmu Komputer.mp4</div>
<div class="t " style="left:916.5px;top:267px;font-size:14px;color:#25282c;letter-spacing:-0.227px;">8 апр. 2024</div>
<div class="t " style="left:1052.3px;top:267px;font-size:14px;color:#25282c;letter-spacing:-0.400px;transform:scaleX(0.9824);transform-origin:0 0;">15 мар. 2024</div>
<div class="t " style="left:1188px;top:267px;font-size:14px;color:#25282c;letter-spacing:-0.400px;transform:scaleX(0.9846);transform-origin:0 0;">100 МБ</div>
<div class="row" style="top:300px;"><svg style="left:49px;top:10px" width="22" height="22" viewBox="0 0 22 22" stroke="none" fill="#fcc133"><path d="M1 5a2.500 2.500 0 0 1 2.500-2.500h4c.9 0 1.500.4 2 1l1 1.500h8a2.500 2.500 0 0 1 2.500 2.500v9a2.500 2.500 0 0 1-2.500 2.500h-15a2.500 2.500 0 0 1-2.500-2.500z"/></svg></div>
<div class="t " style="left:472px;top:311px;font-size:14px;color:#25282c;letter-spacing:-0.293px;">В бухгалтерском учете</div>
<div class="t " style="left:916.5px;top:311px;font-size:14px;color:#25282c;letter-spacing:-0.227px;">8 апр. 2024</div>
<div class="t " style="left:1052.3px;top:311px;font-size:14px;color:#25282c;letter-spacing:-0.400px;transform:scaleX(0.9824);transform-origin:0 0;">15 мар. 2024</div>
<div class="t " style="left:1188px;top:311px;font-size:14px;color:#25282c;letter-spacing:-0.400px;transform:scaleX(0.9846);transform-origin:0 0;">100 МБ</div>
<div class="row" style="top:344px;"><div class="fi" style="background:#f5143c;color:#fff;font-size:6.2px;font-weight:700;text-align:center;line-height:20px;letter-spacing:0">PPT</div></div>
<div class="t " style="left:472px;top:355px;font-size:14px;color:#25282c;letter-spacing:-0.152px;">Московская биржа.ppt</div>
<div class="t " style="left:916.5px;top:355px;font-size:14px;color:#25282c;letter-spacing:-0.227px;">8 апр. 2024</div>
<div class="t " style="left:1052.3px;top:355px;font-size:14px;color:#25282c;letter-spacing:-0.400px;transform:scaleX(0.9824);transform-origin:0 0;">15 мар. 2024</div>
<div class="t " style="left:1188px;top:355px;font-size:14px;color:#25282c;letter-spacing:-0.400px;transform:scaleX(0.9846);transform-origin:0 0;">100 МБ</div>
<div class="row" style="top:388px;"><div class="fi" style="background:#47aff2"><svg style="left:0;top:0" width="20" height="20" viewBox="0 0 20 20" fill="#fff" stroke="#fff" stroke-width="2.600" stroke-linejoin="round"><path d="M7.200 5.300v9.400l7.500-4.700z"/></svg></div></div>
<div class="t " style="left:472px;top:399px;font-size:14px;color:#25282c;letter-spacing:-0.400px;transform:scaleX(0.9820);transform-origin:0 0;">Спец Прокат Тех Обл Сбыт.mkv</div>
<div class="t " style="left:916.5px;top:399px;font-size:14px;color:#25282c;letter-spacing:-0.227px;">8 апр. 2024</div>
<div class="t " style="left:1052.3px;top:399px;font-size:14px;color:#25282c;letter-spacing:-0.400px;transform:scaleX(0.9824);transform-origin:0 0;">15 мар. 2024</div>
<div class="t " style="left:1188px;top:399px;font-size:14px;color:#25282c;letter-spacing:-0.400px;transform:scaleX(0.9846);transform-origin:0 0;">100 МБ</div>
<div class="row" style="top:432px;"><div class="fi" style="background:#f26322"><svg style="left:0;top:0" width="20" height="20" viewBox="0 0 20 20" fill="#fff" stroke="none"><circle cx="7" cy="6.500" r="1.300"/><path d="M3.500 15.500l3.200-4.500 1.800 2 3.200-4.500 4.800 7z"/></svg></div></div>
<div class="t " style="left:472px;top:443px;font-size:14px;color:#25282c;letter-spacing:-0.278px;">Bisnis dan Manajemen.png</div>
<div class="t " style="left:916.5px;top:443px;font-size:14px;color:#25282c;letter-spacing:-0.227px;">8 апр. 2024</div>
<div class="t " style="left:1052.3px;top:443px;font-size:14px;color:#25282c;letter-spacing:-0.400px;transform:scaleX(0.9824);transform-origin:0 0;">15 мар. 2024</div>
<div class="t " style="left:1188px;top:443px;font-size:14px;color:#25282c;letter-spacing:-0.400px;transform:scaleX(0.9846);transform-origin:0 0;">100 МБ</div>
<div class="row" style="top:476px;background:#eef0f4;border-radius:13px;border-top-color:transparent;"><div class="fi" style="background:#47aff2"><svg style="left:0;top:0" width="20" height="20" viewBox="0 0 20 20" fill="#fff" stroke="#fff" stroke-width="2.600" stroke-linejoin="round"><path d="M7.200 5.300v9.400l7.500-4.700z"/></svg></div></div>
<div class="t " style="left:472px;top:487px;font-size:14px;color:#25282c;letter-spacing:-0.397px;">Есть ли риски?.mkv</div>
<div class="t " style="left:916.5px;top:487px;font-size:14px;color:#25282c;letter-spacing:-0.227px;">8 апр. 2024</div>
<div class="t " style="left:1052.3px;top:487px;font-size:14px;color:#25282c;letter-spacing:-0.400px;transform:scaleX(0.9824);transform-origin:0 0;">15 мар. 2024</div>
<div class="t " style="left:1188px;top:487px;font-size:14px;color:#25282c;letter-spacing:-0.400px;transform:scaleX(0.9846);transform-origin:0 0;">100 МБ</div>
<div class="row" style="top:520px;border-top-color:transparent;"><div class="fi" style="background:#f5143c"><svg style="left:0;top:0" width="20" height="20" viewBox="0 0 20 20" fill="none" stroke="#fff" stroke-width="1.100" stroke-linejoin="round"><path d="M9.600 4.500c-.7 0-.9 1-.6 2.300.5 2.200 2.700 5.700 5.200 6.200 1.300.3 2-.2 1.700-.8-.4-.8-3.500-.6-6.300.2-2.400.7-4.500 1.900-5.100 2.600-.5.600.2 1 .9.500 1.300-.9 3-4.500 3.800-7.300.4-1.500.9-3.700.4-3.700z"/></svg></div></div>
<div class="t " style="left:472px;top:531px;font-size:14px;color:#25282c;letter-spacing:-0.328px;">Вести учет имущества.pdf</div>
<div class="t " style="left:916.5px;top:531px;font-size:14px;color:#25282c;letter-spacing:-0.227px;">8 апр. 2024</div>
<div class="t " style="left:1052.3px;top:531px;font-size:14px;color:#25282c;letter-spacing:-0.400px;transform:scaleX(0.9824);transform-origin:0 0;">15 мар. 2024</div>
<div class="t " style="left:1188px;top:531px;font-size:14px;color:#25282c;letter-spacing:-0.400px;transform:scaleX(0.9846);transform-origin:0 0;">100 МБ</div>
<div class="row" style="top:564px;"><div class="fi" style="background:#f5143c"><svg style="left:0;top:0" width="20" height="20" viewBox="0 0 20 20" fill="none" stroke="#fff" stroke-width="1.100" stroke-linejoin="round"><path d="M9.600 4.500c-.7 0-.9 1-.6 2.300.5 2.200 2.700 5.700 5.200 6.200 1.300.3 2-.2 1.700-.8-.4-.8-3.500-.6-6.300.2-2.400.7-4.500 1.900-5.100 2.600-.5.600.2 1 .9.500 1.300-.9 3-4.500 3.800-7.300.4-1.500.9-3.700.4-3.700z"/></svg></div></div>
<div class="t " style="left:472px;top:575px;font-size:14px;color:#25282c;letter-spacing:-0.300px;">Все кассовые документы.pdf</div>
<div class="t " style="left:916.5px;top:575px;font-size:14px;color:#25282c;letter-spacing:-0.227px;">8 апр. 2024</div>
<div class="t " style="left:1052.3px;top:575px;font-size:14px;color:#25282c;letter-spacing:-0.400px;transform:scaleX(0.9824);transform-origin:0 0;">15 мар. 2024</div>
<div class="t " style="left:1188px;top:575px;font-size:14px;color:#25282c;letter-spacing:-0.400px;transform:scaleX(0.9846);transform-origin:0 0;">100 МБ</div>
<div class="row" style="top:608px;"><div class="fi" style="background:#12ad4b;color:#fff;font-size:5.6px;font-weight:700;text-align:center;line-height:20px;letter-spacing:0">XSLX</div></div>
<div class="t " style="left:472px;top:619px;font-size:14px;color:#25282c;letter-spacing:-0.400px;transform:scaleX(0.9760);transform-origin:0 0;">Тех Регион Проф Сталь</div>
<div class="t " style="left:916.5px;top:619px;font-size:14px;color:#25282c;letter-spacing:-0.227px;">8 апр. 2024</div>
<div class="t " style="left:1052.3px;top:619px;font-size:14px;color:#25282c;letter-spacing:-0.400px;transform:scaleX(0.9824);transform-origin:0 0;">15 мар. 2024</div>
<div class="t " style="left:1188px;top:619px;font-size:14px;color:#25282c;letter-spacing:-0.400px;transform:scaleX(0.9846);transform-origin:0 0;">100 МБ</div>
<div class="row" style="top:652px;"><div class="fi" style="background:#47aff2"><svg style="left:0;top:0" width="20" height="20" viewBox="0 0 20 20" fill="#fff" stroke="#fff" stroke-width="2.600" stroke-linejoin="round"><path d="M7.200 5.300v9.400l7.500-4.700z"/></svg></div></div>
<div class="t " style="left:472px;top:663px;font-size:14px;color:#25282c;letter-spacing:-0.400px;transform:scaleX(0.9832);transform-origin:0 0;">En+ Group.mkv</div>
<div class="t " style="left:916.5px;top:663px;font-size:14px;color:#25282c;letter-spacing:-0.227px;">8 апр. 2024</div>
<div class="t " style="left:1052.3px;top:663px;font-size:14px;color:#25282c;letter-spacing:-0.400px;transform:scaleX(0.9824);transform-origin:0 0;">15 мар. 2024</div>
<div class="t " style="left:1188px;top:663px;font-size:14px;color:#25282c;letter-spacing:-0.400px;transform:scaleX(0.9846);transform-origin:0 0;">100 МБ</div>
<div class="row" style="top:696px;"><div class="fi" style="background:#b9bec5;color:#fff;font-size:6px;font-weight:700;text-align:center;line-height:20px;letter-spacing:0">GIF</div></div>
<div class="t " style="left:472px;top:707px;font-size:14px;color:#25282c;letter-spacing:-0.385px;">Столяр.gif</div>
<div class="t " style="left:916.5px;top:707px;font-size:14px;color:#25282c;letter-spacing:-0.227px;">8 апр. 2024</div>
<div class="t " style="left:1052.3px;top:707px;font-size:14px;color:#25282c;letter-spacing:-0.400px;transform:scaleX(0.9824);transform-origin:0 0;">15 мар. 2024</div>
<div class="t " style="left:1188px;top:707px;font-size:14px;color:#25282c;letter-spacing:-0.400px;transform:scaleX(0.9846);transform-origin:0 0;">100 МБ</div>
<div class="row" style="top:740px;"><div class="fi" style="background:#47aff2"><svg style="left:0;top:0" width="20" height="20" viewBox="0 0 20 20" fill="#fff" stroke="#fff" stroke-width="2.600" stroke-linejoin="round"><path d="M7.200 5.300v9.400l7.500-4.700z"/></svg></div></div>
<div class="t " style="left:472px;top:751px;font-size:14px;color:#25282c;letter-spacing:-0.290px;">Сургутнефтегаз.mkv</div>
<div class="t " style="left:916.5px;top:751px;font-size:14px;color:#25282c;letter-spacing:-0.227px;">8 апр. 2024</div>
<div class="t " style="left:1052.3px;top:751px;font-size:14px;color:#25282c;letter-spacing:-0.400px;transform:scaleX(0.9824);transform-origin:0 0;">15 мар. 2024</div>
<div class="t " style="left:1188px;top:751px;font-size:14px;color:#25282c;letter-spacing:-0.400px;transform:scaleX(0.9846);transform-origin:0 0;">100 МБ</div>
<div class="row" style="top:784px;"><div class="fi" style="background:#47aff2"><svg style="left:0;top:0" width="20" height="20" viewBox="0 0 20 20" fill="#fff" stroke="#fff" stroke-width="2.600" stroke-linejoin="round"><path d="M7.200 5.300v9.400l7.500-4.700z"/></svg></div></div>
<div class="t " style="left:472px;top:795px;font-size:14px;color:#25282c;letter-spacing:-0.264px;">Фитнес тренер.mkv</div>
<div class="t " style="left:916.5px;top:795px;font-size:14px;color:#25282c;letter-spacing:-0.227px;">8 апр. 2024</div>
<div class="t " style="left:1052.3px;top:795px;font-size:14px;color:#25282c;letter-spacing:-0.400px;transform:scaleX(0.9824);transform-origin:0 0;">15 мар. 2024</div>
<div class="t " style="left:1188px;top:795px;font-size:14px;color:#25282c;letter-spacing:-0.400px;transform:scaleX(0.9846);transform-origin:0 0;">100 МБ</div>
<div class="row" style="top:828px;"><div class="fi" style="background:#0a7cf5;color:#fff;font-size:5px;font-weight:700;text-align:center;line-height:20px;letter-spacing:0"><span style="display:inline-block;transform:scaleX(1.14)">DOCX</span></div></div>
<div class="t " style="left:472px;top:839px;font-size:14px;color:#25282c;letter-spacing:-0.400px;transform:scaleX(0.9938);transform-origin:0 0;">Справка по форме 182н.docx</div>
<div class="t " style="left:916.5px;top:839px;font-size:14px;color:#25282c;letter-spacing:-0.227px;">8 апр. 2024</div>
<div class="t " style="left:1052.3px;top:839px;font-size:14px;color:#25282c;letter-spacing:-0.400px;transform:scaleX(0.9824);transform-origin:0 0;">15 мар. 2024</div>
<div class="t " style="left:1188px;top:839px;font-size:14px;color:#25282c;letter-spacing:-0.400px;transform:scaleX(0.9846);transform-origin:0 0;">100 МБ</div>
<div class="row" style="top:872px;"><div class="fi" style="background:#0a7cf5;color:#fff;font-size:5px;font-weight:700;text-align:center;line-height:20px;letter-spacing:0"><span style="display:inline-block;transform:scaleX(1.14)">DOCX</span></div></div>
<div class="t " style="left:472px;top:883px;font-size:14px;color:#25282c;letter-spacing:-0.321px;">В бухгалтерском учете.docx</div>
<div class="t " style="left:916.5px;top:883px;font-size:14px;color:#25282c;letter-spacing:-0.227px;">8 апр. 2024</div>
<div class="t " style="left:1052.3px;top:883px;font-size:14px;color:#25282c;letter-spacing:-0.400px;transform:scaleX(0.9824);transform-origin:0 0;">15 мар. 2024</div>
<div class="t " style="left:1188px;top:883px;font-size:14px;color:#25282c;letter-spacing:-0.400px;transform:scaleX(0.9846);transform-origin:0 0;">100 МБ</div>
<svg style="left:399px;top:489px" width="18" height="18" viewBox="0 0 18 18"><rect x=".8" y=".8" width="16.400" height="16.400" rx="5" fill="#fff" stroke="#9097a1" stroke-width="1.500"/></svg>
<div class="abs" style="left:348px;top:899px;width:1116px;height:16px;background:#f2f3f7"></div>
<div class="abs" style="left:368px;top:875px;width:24px;height:24px;background:radial-gradient(circle at 100% 0, transparent 23.500px, #f2f3f7 24.500px)"></div>
<div class="abs" style="left:1420px;top:875px;width:24px;height:24px;background:radial-gradient(circle at 0 0, transparent 23.500px, #f2f3f7 24.500px)"></div>
<div class="abs" style="left:1288px;top:482px;width:128px;height:32px;border-radius:11px;background:#fff;box-shadow:0 1px 5px rgba(40,45,60,.07)"></div>
<svg style="left:1293px;top:486px" width="24" height="24" viewBox="0 0 24 24" fill="none" stroke="#858c96" stroke-width="1.85" stroke-linecap="round" stroke-linejoin="round" ><circle cx="7.500" cy="6.500" r="3.800"/><circle cx="7.500" cy="17.300" r="3.800"/><circle cx="17" cy="11.700" r="3.600"/></svg>
<svg style="left:1324px;top:486px" width="24" height="24" viewBox="0 0 24 24" fill="none" stroke="#858c96" stroke-width="1.9" stroke-linecap="round" stroke-linejoin="round" ><path d="M9.600 7c2.200-2 4.600-3.600 7.200-3.100 2.400.5 3.900 2.600 3.700 4.900-.2 2-1.500 3.700-3.300 5.400M6.500 9.600c-1.800 1.700-3.100 3.400-3.100 5.500 0 2.600 2 4.800 4.600 5 2.400.2 4.400-1.300 6.400-3.300M9.800 14.200l4.600-4.400"/></svg>
<svg style="left:1356px;top:486px" width="24" height="24" viewBox="0 0 24 24" fill="none" stroke="#858c96" stroke-width="1.9" stroke-linecap="round" stroke-linejoin="round" ><path d="M11.90 3.70 L14.49 9.34 L20.65 10.06 L16.08 14.26 L17.31 20.34 L11.90 17.30 L6.49 20.34 L7.72 14.26 L3.15 10.06 L9.31 9.34Z"/></svg>
<svg style="left:1388px;top:486px" width="24" height="24" viewBox="0 0 24 24" fill="#858c96" stroke="none" stroke-width="2" stroke-linecap="round" stroke-linejoin="round" ><circle cx="4.900" cy="11.900" r="1.900"/><circle cx="11.900" cy="11.900" r="1.900"/><circle cx="19" cy="11.900" r="1.900"/></svg>
<div class="abs" style="left:1112px;top:514px;width:208px;height:272px;border-radius:16px;background:#fff;box-shadow:0 7px 20px rgba(30,35,50,.13),0 0 2px rgba(30,35,50,.05)"></div>
<div class="abs" style="left:1120px;top:522px;width:192px;height:56px;border-radius:11px;background:#eef0f4"></div>
<div class="t " style="left:1126px;top:530px;font-size:13.5px;color:#25282c;letter-spacing:-0.061px;">Marketing_Blog_Post_Trend...</div>
<div class="t " style="left:1126px;top:550px;font-size:13.5px;color:#6f7680;letter-spacing:-0.398px;">1 фев. 2025 г., 13:00</div>
<div class="t " style="left:1126px;top:586px;font-size:13.5px;color:#25282c;letter-spacing:-0.061px;">Marketing_Blog_Post_Trend...</div>
<div class="t " style="left:1126px;top:606px;font-size:13.5px;color:#6f7680;letter-spacing:-0.400px;transform:scaleX(0.9789);transform-origin:0 0;">13 фев. 2025 г., 16:10</div>
<div class="t " style="left:1126px;top:642px;font-size:13.5px;color:#25282c;letter-spacing:-0.061px;">Marketing_Blog_Post_Trend...</div>
<div class="t " style="left:1126px;top:662px;font-size:13.5px;color:#6f7680;letter-spacing:-0.175px;">27 мар. 2025 г., 14:20</div>
<div class="t " style="left:1126px;top:698px;font-size:13.5px;color:#25282c;letter-spacing:0.047px;">Чебурашка_2.4</div>
<div class="t " style="left:1126px;top:718px;font-size:13.5px;color:#6f7680;letter-spacing:-0.175px;">27 мар. 2025 г., 14:20</div>
<div class="abs" style="left:1120px;top:754px;width:192px;height:24px;border-radius:8px;background:#f2f3f7"></div>
<div class="t " style="left:1175.9px;top:755.5px;font-size:10.6px;font-weight:700;color:#1d1f22;letter-spacing:0.300px;transform:scaleX(1.1179);transform-origin:0 0;">ВСЕ ВЕРСИИ</div>
</div></body></html>
